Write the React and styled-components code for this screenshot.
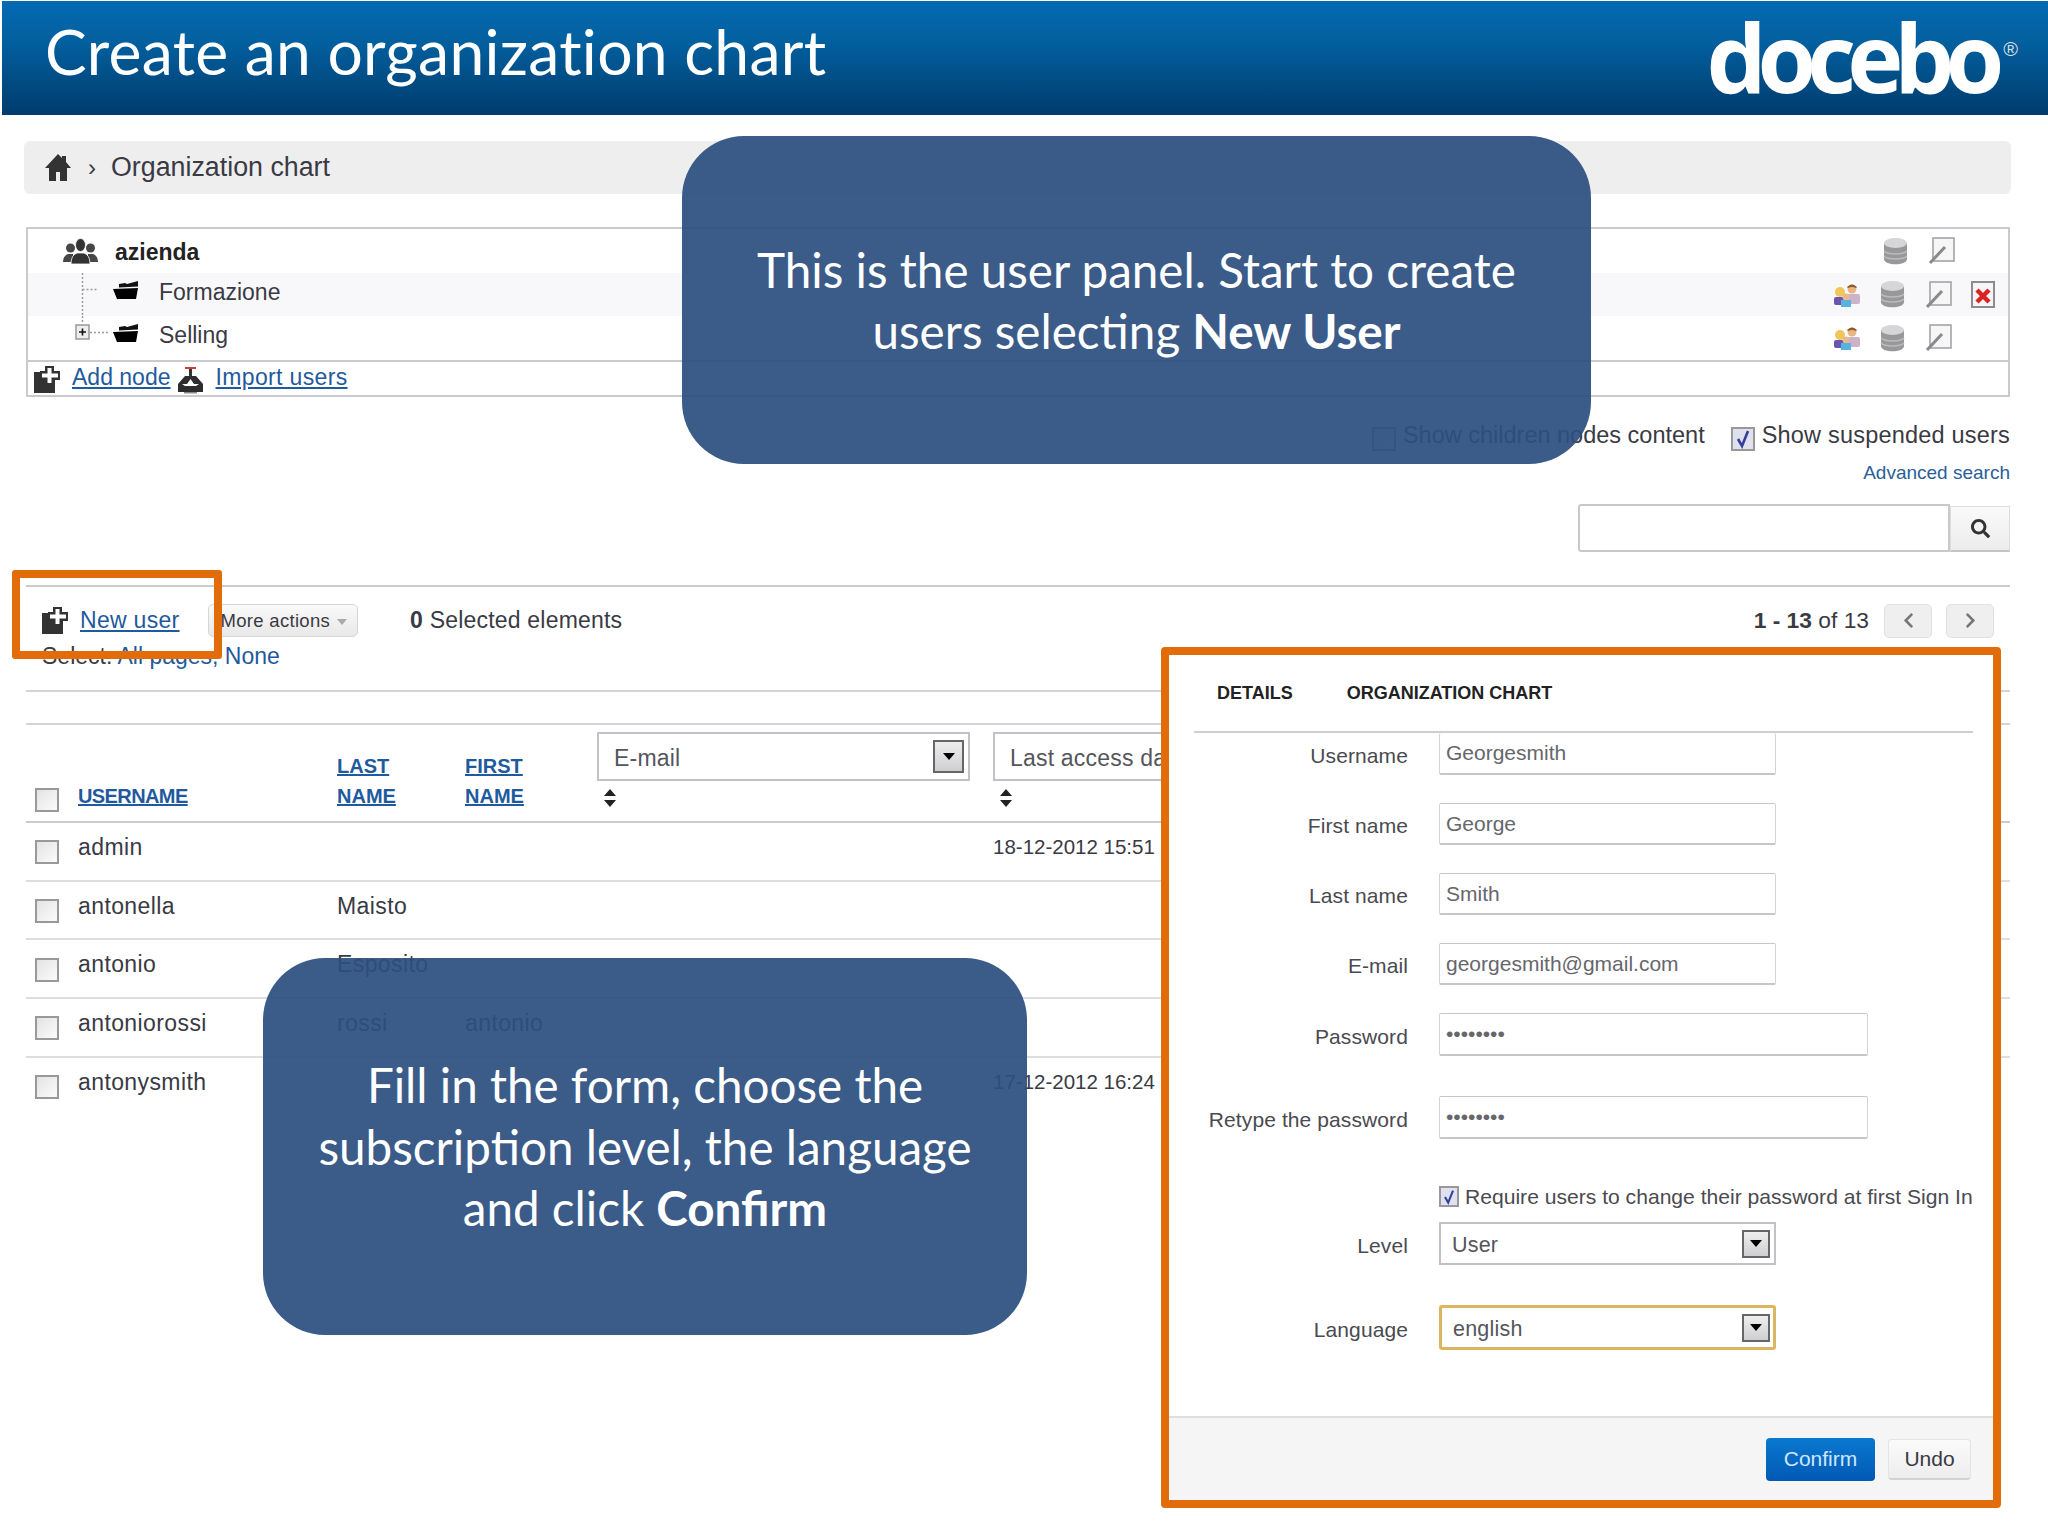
import React from "react"
import styled, { createGlobalStyle } from "styled-components"
import { FaSearch, FaChevronLeft, FaChevronRight } from "react-icons/fa"

const GlobalStyle = createGlobalStyle`
  body {
    margin: 0;
    background: #fff;
    font-family: "Liberation Sans", Arial, sans-serif;
    color: #3a3a44;
  }
`

const rows = [
  { username: "admin", date: "18-12-2012 15:51" },
  { username: "antonella", last: "Maisto" },
  { username: "antonio", last: "Esposito" },
  { username: "antoniorossi", last: "rossi", first: "antonio" },
  { username: "antonysmith", date: "17-12-2012 16:24" },
]

// small drawings of the old docebo icon set
const HomeIcon = () => (
  <svg width="26" height="27" viewBox="0 0 26 27">
    <path d="M13 0 L17 4 V2 H21 V8 L26 14 H22 V27 H15 V18 H11 V27 H4 V14 H0 Z" fill="#333" />
  </svg>
)

const PeopleIcon = () => (
  <svg width="35" height="27" viewBox="0 0 35 27">
    <g fill="#474747">
      <circle cx="7.5" cy="10" r="4.5" />
      <path d="M0 24 Q0 18 5 16 L10 16 L11 24 Z" />
      <circle cx="27.5" cy="10" r="4.5" />
      <path d="M35 24 Q35 18 30 16 L25 16 L24 24 Z" />
    </g>
    <g fill="#333" stroke="#fff" strokeWidth="0.8">
      <ellipse cx="17.5" cy="7" rx="5" ry="6.5" />
      <path d="M8 26 Q8 17 14 15 H21 Q27 17 27 26 Z" />
    </g>
  </svg>
)

const FolderIcon = () => (
  <FolderSvg width="26" height="18" viewBox="0 0 26 18">
    <path d="M6 3 L12 2 L14 3 L25 0 L25 5.5 L6 6.5 Z" fill="#111" />
    <path d="M0 8 L25 7 L23 18 L4 18 Z" fill="#000" />
  </FolderSvg>
)

const PlusDocIcon = () => (
  <svg width="27" height="28" viewBox="0 0 27 28">
    <rect x="0" y="6" width="21" height="21" fill="#333" />
    <path d="M11 0 H20 V5 H26 V14 H20 V19 H11 V14 H6 V5 H11 Z" fill="#333" />
    <path d="M13.5 2 H17.5 V7.5 H24 V11.5 H17.5 V17 H13.5 V11.5 H8 V7.5 H13.5 Z" fill="#fff" />
  </svg>
)

const ImportIcon = () => (
  <svg width="28" height="28" viewBox="0 0 28 28">
    <rect x="9" y="1" width="11" height="2" fill="#c9413a" />
    <rect x="13" y="3" width="3" height="9" fill="#333" />
    <path d="M2 26 V18 L9 10 H20 L27 18 V26 Z" fill="#2d2d2d" />
    <path d="M6 18 H11 L14.5 13 L18 18 H23 L20 20 H9 Z" fill="#fff" />
    <rect x="8" y="26" width="13" height="1.5" fill="#888" />
  </svg>
)

const DbIcon = () => (
  <svg width="25" height="27" viewBox="0 0 25 27">
    <path d="M1 5 V21 C1 28 24 28 24 21 V5 Z" fill="#98989b" />
    <ellipse cx="12.5" cy="5" rx="11.5" ry="5" fill="#d6d6d8" />
    <path d="M1 13 C5 17 20 17 24 13 M1 18 C5 22 20 22 24 18" stroke="#bcbcbf" strokeWidth="1.5" fill="none" />
  </svg>
)

const EditIcon = () => (
  <svg width="27" height="28" viewBox="0 0 27 28">
    <rect x="5" y="1" width="21" height="23" fill="#f6f6f7" stroke="#a4a4a8" strokeWidth="1.6" />
    <path d="M2 26 L17 10" stroke="#8a8a8e" strokeWidth="3" />
  </svg>
)

const GroupIcon = () => (
  <svg width="28" height="24" viewBox="0 0 28 24">
    <circle cx="19" cy="6" r="4.5" fill="#e8b583" />
    <path d="M14 4 Q19 -1 24 4 L23 5 Q19 3 15 5 Z" fill="#8a5a2c" />
    <rect x="14" y="11" width="13" height="10" rx="2" fill="#cbb3c8" />
    <circle cx="7" cy="9" r="5" fill="#f0c65c" />
    <rect x="1" y="14" width="11" height="8" rx="2" fill="#6a55b0" />
    <circle cx="13" cy="14" r="3.5" fill="#eab88c" />
    <rect x="8" y="17" width="10" height="7" fill="#58b2de" />
  </svg>
)

const DeleteIcon = () => (
  <svg width="24" height="27" viewBox="0 0 24 27">
    <rect x="1" y="1" width="22" height="25" fill="#f5f5f6" stroke="#8c8c90" strokeWidth="2" />
    <path d="M6 9 L18 21 M18 9 L6 21" stroke="#dd2222" strokeWidth="4.5" />
  </svg>
)

const CheckMark = () => (
  <svg width="20" height="22" viewBox="0 0 20 22">
    <path d="M5 11 L9 18 L15 3" stroke="#33409a" strokeWidth="2.6" fill="none" />
  </svg>
)

const SortIcon = () => (
  <SortSvg width="14" height="18" viewBox="0 0 14 18">
    <path d="M7 0 L13 7 H1 Z M7 18 L1 11 H13 Z" fill="#222" />
  </SortSvg>
)

const TreeBranch = () => (
  <svg width="38" height="44" viewBox="0 0 38 44">
    <path d="M7.5 0 V44 M7.5 16.5 H22" stroke="#9a9a9e" strokeWidth="1.5" strokeDasharray="2 2" />
  </svg>
)

const TreePlus = () => (
  <svg width="38" height="44" viewBox="0 0 38 44">
    <path d="M7.5 0 V8 M15 16.5 H33" stroke="#9a9a9e" strokeWidth="1.5" strokeDasharray="2 2" />
    <rect x="1" y="9" width="13" height="14" fill="#eee" stroke="#999" strokeWidth="1.5" />
    <path d="M4 16 H11 M7.5 12.5 V19.5" stroke="#111" strokeWidth="1.6" />
  </svg>
)

const Field = ({ label, value, wide, top }) => (
  <FieldRow $top={top}>
    <FieldLabel>{label}</FieldLabel>
    <TextBox $wide={wide} $clip={top === 0}>{value}</TextBox>
  </FieldRow>
)

const Select = ({ label, width, focus, size }) => (
  <SelectBox $width={width} $focus={focus} $size={size}>
    <span>{label}</span>
    <ArrowButton $size={size} />
  </SelectBox>
)

const App = () => {
  return (
    <Page>
      <GlobalStyle />
      <Header>
        <Title>Create an organization chart</Title>
        <Logo>docebo<LogoMark>®</LogoMark></Logo>
      </Header>

      <Content>
        <Breadcrumb>
          <HomeIcon />
          <Crumb>›</Crumb>
          <span>Organization chart</span>
        </Breadcrumb>

        <TreeBox>
          <TreeRow $height={44}>
            <TreeName $left={35}>
              <PeopleIcon />
              <RootLabel>azienda</RootLabel>
            </TreeName>
            <Actions $right={11}>
              <span />
              <DbIcon />
              <EditIcon />
              <span />
            </Actions>
          </TreeRow>
          <TreeRow $height={43} $shade>
            <TreeName $left={47}>
              <TreeBranch />
              <FolderIcon />
              <NodeLabel>Formazione</NodeLabel>
            </TreeName>
            <Actions $right={14}>
              <GroupIcon />
              <DbIcon />
              <EditIcon />
              <DeleteIcon />
            </Actions>
          </TreeRow>
          <TreeRow $height={44}>
            <TreeName $left={47}>
              <TreePlus />
              <FolderIcon />
              <NodeLabel>Selling</NodeLabel>
            </TreeName>
            <Actions $right={14}>
              <GroupIcon />
              <DbIcon />
              <EditIcon />
              <span />
            </Actions>
          </TreeRow>
          <TreeFooter>
            <PlusDocIcon />
            <FooterLink $ml={11}>Add node</FooterLink>
            <ImportSlot><ImportIcon /></ImportSlot>
            <FooterLink $ml={11} $spread>Import users</FooterLink>
          </TreeFooter>
        </TreeBox>

        <Filters>
          <FilterRow>
            <CheckLabel>
              <CheckBox />
              Show children nodes content
            </CheckLabel>
            <CheckLabel $wide>
              <CheckBox $on><CheckMark /></CheckBox>
              Show suspended users
            </CheckLabel>
          </FilterRow>
          <AdvancedLink>Advanced search</AdvancedLink>
          <SearchBox>
            <SearchInput />
            <SearchButton><FaSearch size={19} color="#333" /></SearchButton>
          </SearchBox>
        </Filters>

        <Toolbar>
          <ToolRow>
            <PlusDocIcon />
            <TextLink $ml={11}>New user</TextLink>
            <MoreButton>More actions<Caret /></MoreButton>
            <Selected><b>0</b> Selected elements</Selected>
            <Pager>
              <PagerText><b>1 - 13</b> of 13</PagerText>
              <PagerButton><FaChevronLeft size={17} color="#777" /></PagerButton>
              <PagerButton $ml={14}><FaChevronRight size={17} color="#777" /></PagerButton>
            </Pager>
          </ToolRow>
          <SelectLine>Select: <PlainLink>All pages,</PlainLink> <PlainLink>None</PlainLink></SelectLine>
        </Toolbar>
        <Spacer />

        <HeadRow>
          <HeadCheck><CheckBox /></HeadCheck>
          <HeadLink $tight>USERNAME</HeadLink>
          <HeadLink>LAST<br />NAME</HeadLink>
          <HeadLink>FIRST<br />NAME</HeadLink>
          <PickCell>
            <Select label="E-mail" width="373px" />
            <SortIcon />
          </PickCell>
          <PickCell>
            <Select label="Last access date" width="373px" />
            <SortIcon />
          </PickCell>
        </HeadRow>
        {rows.map((r, i) => (
          <UserRow key={r.username} $last={i === rows.length - 1}>
            <RowCheck><CheckBox /></RowCheck>
            <Cell>{r.username}</Cell>
            <Cell>{r.last}</Cell>
            <Cell>{r.first}</Cell>
            <span />
            <DateCell>{r.date}</DateCell>
          </UserRow>
        ))}
      </Content>

      <Callout $left={682} $top={136} $width={909} $height={328}>
        <span>This is the user panel. Start to create users selecting <b>New User</b></span>
      </Callout>
      <Callout $left={263} $top={958} $width={764} $height={377}>
        <span>Fill in the form, choose the subscription level, the language and click <b>Confirm</b></span>
      </Callout>

      <NewUserMark />

      <Modal>
        <Tabs>
          <Tab>DETAILS</Tab>
          <Tab>ORGANIZATION CHART</Tab>
        </Tabs>
        <FormBody>
          <Field label="Username" value="Georgesmith" top={0} />
          <Field label="First name" value="George" top={28} />
          <Field label="Last name" value="Smith" top={28} />
          <Field label="E-mail" value="georgesmith@gmail.com" top={28} />
          <Field label="Password" value="••••••••" wide top={28} />
          <Field label="Retype the password" value="••••••••" wide top={40} />
          <FieldRow $top={47}>
            <span />
            <RequireLine>
              <CheckBox $small $on><CheckMark /></CheckBox>
              Require users to change their password at first Sign In
            </RequireLine>
          </FieldRow>
          <FieldRow $top={15}>
            <FieldLabel>Level</FieldLabel>
            <Select label="User" width="337px" size="form" />
          </FieldRow>
          <FieldRow $top={40}>
            <FieldLabel>Language</FieldLabel>
            <Select label="english" width="337px" size="form" focus />
          </FieldRow>
        </FormBody>
        <ModalFooter>
          <ConfirmButton>Confirm</ConfirmButton>
          <UndoButton>Undo</UndoButton>
        </ModalFooter>
      </Modal>
    </Page>
  )
}

export default App

const Page = styled.div`
  position: relative;
  width: 2048px;
  height: 1536px;
  overflow: hidden;
  background: #fff;
`

const Header = styled.header`
  display: flex;
  align-items: flex-start;
  justify-content: space-between;
  height: 114px;
  margin: 1px 0 0 2px;
  padding: 0 30px 0 43px;
  box-sizing: border-box;
  background: linear-gradient(#046ab2 0%, #02609f 35%, #003b6d 100%);
  color: #fff;
`

const Title = styled.h1`
  margin: 12px 0 0;
  font: 400 62.4px/76px Lato, "Open Sans", sans-serif;
  letter-spacing: 0.3px;
`

const Logo = styled.div`
  display: flex;
  align-items: flex-start;
  font: 700 95px/110px "Open Sans", Lato, sans-serif;
  letter-spacing: -9px;
`

const LogoMark = styled.span`
  margin: 38px 0 0 8px;
  font: 400 20px/20px "Liberation Sans", sans-serif;
  letter-spacing: 0;
  color: #d5dfe8;
`

const Content = styled.main`
  display: flex;
  flex-direction: column;
  width: 1984px;
  margin-left: 26px;
  font-size: 23px;
`

const Breadcrumb = styled.nav`
  display: flex;
  align-items: center;
  height: 53px;
  margin: 26px -1px 0 -2px;
  padding-left: 21px;
  border-radius: 6px;
  background: #eeeeef;
  color: #3a3a44;
  font-size: 26.8px;
`

const Crumb = styled.span`
  margin: 0 15px 0 17px;
  font-size: 24px;
`

const TreeBox = styled.section`
  margin-top: 33px;
  height: 170px;
  box-sizing: border-box;
  border: 2px solid #c9c9ce;
`

const TreeRow = styled.div`
  display: flex;
  align-items: center;
  justify-content: space-between;
  height: ${(props) => props.$height}px;
  background: ${(props) => (props.$shade ? "#f8f8fa" : "transparent")};
`

const TreeName = styled.div`
  display: flex;
  align-items: center;
  padding-left: ${(props) => props.$left}px;
`

const FolderSvg = styled.svg`
  margin-bottom: 10px;
`

const RootLabel = styled.strong`
  margin-left: 17px;
  padding-top: 2px;
  color: #222;
`

const NodeLabel = styled.span`
  margin-left: 20px;
  padding-bottom: 5px;
`

const Actions = styled.div`
  display: grid;
  grid-template-columns: 47px 45px 46px 23px;
  align-items: center;
  padding-right: ${(props) => props.$right}px;
`

const TreeFooter = styled.div`
  display: flex;
  align-items: center;
  height: 36px;
  padding-left: 6px;
  border-top: 2px solid #c9c9ce;
`

const ImportSlot = styled.span`
  display: flex;
  margin-left: 6px;
`

const TextLink = styled.a`
  margin-left: ${(props) => props.$ml || 0}px;
  color: #1f5a9e;
  text-decoration: underline;
  letter-spacing: 0.3px;
`

const FooterLink = styled(TextLink)`
  margin-bottom: 5px;
  letter-spacing: ${(props) => (props.$spread ? "0.35px" : "0")};
`

const Filters = styled.section`
  display: flex;
  flex-direction: column;
  align-items: flex-end;
`

const FilterRow = styled.div`
  display: flex;
  gap: 26px;
  margin-top: 30px;
`

const CheckLabel = styled.label`
  display: flex;
  align-items: flex-start;
  gap: 7px;
  height: 24px;
  font-size: 23.5px;
  letter-spacing: ${(props) => (props.$wide ? "0.2px" : "0")};
  line-height: 16px;
  white-space: nowrap;
`

const CheckBox = styled.span`
  display: flex;
  align-items: center;
  justify-content: center;
  flex: none;
  width: ${(props) => (props.$small ? "20px" : "24px")};
  height: ${(props) => (props.$small ? "21px" : "24px")};
  box-sizing: border-box;
  border: 2px solid #999;
  background: ${(props) => (props.$on ? "#dfe1ef" : "linear-gradient(135deg, #e3e3e3, #fbfbfb)")};
`

const AdvancedLink = styled.a`
  margin-top: 11px;
  font-size: 19px;
  line-height: 22px;
  color: #2a6099;
`

const SearchBox = styled.div`
  display: flex;
  align-items: flex-end;
  margin-top: 20px;
`

const SearchInput = styled.div`
  width: 372px;
  height: 48px;
  box-sizing: border-box;
  border: 2px solid #c9c9cc;
  border-radius: 3px 0 0 3px;
`

const SearchButton = styled.div`
  display: flex;
  align-items: center;
  justify-content: center;
  width: 60px;
  height: 46px;
  box-sizing: border-box;
  border: 1px solid #ddd;
  border-bottom: 2px solid #c4c4c4;
  background: linear-gradient(#fafafa, #ececec);
`

const Toolbar = styled.section`
  height: 107px;
  margin-top: 33px;
  padding: 17px 16px 0 16px;
  box-sizing: border-box;
  border-top: 2px solid #cbcbcf;
  border-bottom: 2px solid #d4d4d8;
`

const ToolRow = styled.div`
  display: flex;
  align-items: center;
  height: 33px;
`

const MoreButton = styled.div`
  display: flex;
  align-items: center;
  margin-left: 28px;
  height: 33px;
  padding: 0 10px 0 12px;
  box-sizing: border-box;
  border: 1px solid #d6d6d6;
  border-radius: 5px;
  background: linear-gradient(#fafafa, #e8e8e8);
  font-size: 18.5px;
  white-space: nowrap;
  letter-spacing: 0.3px;
`

const Caret = styled.i`
  margin: 3px 0 0 7px;
  border: 5px solid transparent;
  border-top: 6px solid #aaa;
  border-bottom: 0;
`

const Selected = styled.span`
  margin-left: 52px;
  letter-spacing: 0.2px;
`

const Pager = styled.div`
  display: flex;
  align-items: center;
  margin-left: auto;
`

const PagerText = styled.span`
  margin-right: 15px;
  font-size: 22.8px;
`

const PagerButton = styled.div`
  display: flex;
  align-items: center;
  justify-content: center;
  width: 48px;
  height: 34px;
  margin-left: ${(props) => props.$ml || 0}px;
  box-sizing: border-box;
  border: 1px solid #e0e0e2;
  border-radius: 5px;
  background: #efeff0;
`

const SelectLine = styled.div`
  margin-top: 2px;
  line-height: 34px;
`

const PlainLink = styled.a`
  color: #1f5a9e;
`

const Spacer = styled.div`
  height: 31px;
  border-bottom: 2px solid #d4d4d8;
`

const HeadRow = styled.div`
  display: grid;
  grid-template-columns: 52px 259px 128px 132px 396px 1fr;
  height: 98px;
  box-sizing: border-box;
  border-bottom: 2px solid #cbcbcf;
`

const HeadCheck = styled.div`
  align-self: end;
  margin: 0 0 9px 9px;
`

const HeadLink = styled.a`
  align-self: end;
  padding-bottom: 10px;
  font-weight: 700;
  font-size: 20px;
  line-height: 30px;
  letter-spacing: ${(props) => (props.$tight ? "-0.6px" : "0")};
  color: #1f5a9e;
  text-decoration: underline;
`

const PickCell = styled.div`
  display: flex;
  flex-direction: column;
  align-items: flex-start;
  padding-top: 7px;
`

const SelectBox = styled.div`
  display: flex;
  align-items: center;
  justify-content: space-between;
  flex: none;
  width: ${(props) => props.$width};
  height: ${(props) => (props.$size !== "form" ? "49px" : props.$focus ? "45px" : "43px")};
  padding: 0 ${(props) => (props.$focus ? "3px" : "4px")} 0 ${(props) => (props.$size === "form" ? "11px" : "15px")};
  box-sizing: border-box;
  border: ${(props) => (props.$focus ? "3px solid #dcb560" : "2px solid #c2c2c6")};
  border-radius: ${(props) => (props.$focus ? "3px" : "0")};
  background: #fff;
  font-size: ${(props) => (props.$size === "form" ? "21.5px" : "23px")};
  white-space: nowrap;
  color: #55555c;

  span {
    padding-top: 4px;
    letter-spacing: 0.2px;
  }
`

const ArrowButton = styled.i`
  display: flex;
  flex: none;
  align-items: center;
  justify-content: center;
  width: ${(props) => (props.$size === "form" ? "28px" : "31px")};
  height: ${(props) => (props.$size === "form" ? "28px" : "33px")};
  box-sizing: border-box;
  border: 2px solid #666;
  background: linear-gradient(#eee, #cfcfd2);

  &::after {
    content: "";
    border: 6px solid transparent;
    border-top: 7px solid #000;
    border-bottom: 0;
  }
`

const SortSvg = styled.svg`
  margin: 8px 0 0 6px;
`

const UserRow = styled.div`
  display: grid;
  grid-template-columns: 52px 259px 128px 132px 396px 1fr;
  align-items: center;
  height: 58.7px;
  box-sizing: border-box;
  border-bottom: 2px solid ${(props) => (props.$last ? "transparent" : "#dedee1")};
`

const RowCheck = styled.div`
  margin: 2px 0 0 9px;
`

const Cell = styled.span`
  padding-bottom: 8px;
  letter-spacing: 0.4px;
`

const DateCell = styled.span`
  padding-bottom: 8px;
  font-size: 20.5px;
`

const Callout = styled.aside`
  position: absolute;
  left: ${(props) => props.$left}px;
  top: ${(props) => props.$top}px;
  display: flex;
  align-items: center;
  justify-content: center;
  width: ${(props) => props.$width}px;
  height: ${(props) => props.$height}px;
  padding: 0 50px;
  box-sizing: border-box;
  border-radius: 62px;
  background: rgba(44, 79, 127, 0.93);
  color: #fff;
  text-align: center;
  font: 400 47.6px/61.5px Lato, "Open Sans", sans-serif;
`

const NewUserMark = styled.div`
  position: absolute;
  left: 12px;
  top: 570px;
  width: 210px;
  height: 89px;
  box-sizing: border-box;
  border: 8px solid #e36c0a;
  border-radius: 3px;
`

const Modal = styled.div`
  position: absolute;
  left: 1161px;
  top: 647px;
  display: flex;
  flex-direction: column;
  width: 840px;
  height: 861px;
  box-sizing: border-box;
  border: 8px solid #e36c0a;
  border-radius: 4px;
  background: #fff;
`

const Tabs = styled.div`
  display: flex;
  flex: none;
  align-items: center;
  gap: 54px;
  height: 78px;
  margin: 0 20px 0 25px;
  padding: 1px 0 0 23px;
  box-sizing: border-box;
  border-bottom: 2px solid #cfcfd3;
`

const Tab = styled.span`
  font-weight: 700;
  font-size: 18px;
  color: #222;
`

const FormBody = styled.div`
  flex: 1;
`

const FieldRow = styled.div`
  display: grid;
  grid-template-columns: 239px 1fr;
  column-gap: 31px;
  align-items: center;
  margin-top: ${(props) => props.$top || 0}px;
`

const FieldLabel = styled.label`
  padding-top: 4px;
  text-align: right;
  font-size: 21px;
  letter-spacing: 0.1px;
  color: #4a4a50;
`

const TextBox = styled.div`
  display: flex;
  align-items: center;
  width: ${(props) => (props.$wide ? "429px" : "337px")};
  height: ${(props) => (props.$wide ? "43px" : "42px")};
  padding: 0 0 0 6px;
  box-sizing: border-box;
  border: 1px solid #d4d4d6;
  border-top: ${(props) => (props.$clip ? "none" : "1px solid #c6c6c8")};
  border-bottom: 2px solid #c6c6c8;
  border-radius: 2px;
  font-size: 21px;
  color: #66666c;
`

const RequireLine = styled.div`
  display: flex;
  align-items: flex-start;
  gap: 6px;
  margin-right: -20px;
  font-size: 21.1px;
  line-height: 21px;
  white-space: nowrap;
  color: #4a4a50;
`

const ModalFooter = styled.div`
  display: flex;
  flex: none;
  align-items: center;
  justify-content: flex-end;
  gap: 13px;
  height: 84px;
  padding-right: 22px;
  box-sizing: border-box;
  border-top: 2px solid #dedee0;
  background: #f5f5f6;
`

const ConfirmButton = styled.button`
  width: 109px;
  height: 43px;
  border: 0;
  border-radius: 4px;
  background: linear-gradient(#0a78cf, #0159b5);
  font: 400 21px "Liberation Sans", sans-serif;
  color: #cfe6fa;
`

const UndoButton = styled.button`
  width: 83px;
  height: 41px;
  border: 1px solid #e4e4e6;
  border-bottom: 2px solid #d2d2d4;
  border-radius: 4px;
  background: linear-gradient(#fbfbfb, #ededee);
  font: 400 21px "Liberation Sans", sans-serif;
  color: #3a3a44;
`
